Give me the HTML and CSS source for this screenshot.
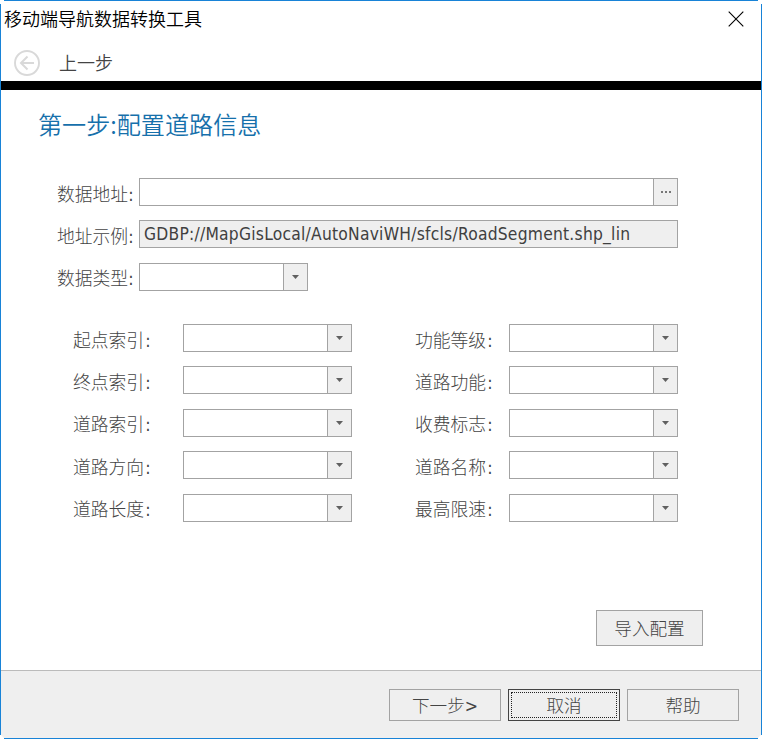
FILE: index.html
```
<!DOCTYPE html>
<html lang="zh-CN">
<head>
<meta charset="utf-8">
<title>移动端导航数据转换工具</title>
<link rel="stylesheet" href="styles.css">
</head>
<body>
<div class="window">
  <i class="corner tl"></i><i class="corner tr"></i><i class="corner bl"></i><i class="corner br"></i>
  <header class="titlebar">
    <span class="title">移动端导航数据转换工具</span>
    <svg class="close" width="16" height="16" viewBox="0 0 16 16"><path d="M.7.7l14.6 14.6M15.3.7L.7 15.3" stroke="#000" stroke-width="1.1" fill="none"/></svg>
  </header>
  <nav class="nav">
    <svg class="back" width="26" height="26" viewBox="0 0 26 26" fill="none" stroke="#d9d9d9"><circle cx="13" cy="13" r="12" stroke-width="1.9"/><path d="M20 13H7.5M13.5 6.500L7 13l6.500 6.500" stroke-width="2"/></svg>
    <span class="prev">上一步</span>
  </nav>
  <main class="page">
    <h1>第一步:配置道路信息</h1>
    <section class="source">
      <label>数据地址<b>:</b></label>
      <div class="field wide"><span class="value"></span><span class="btn dots"><i></i><i></i><i></i></span></div>
      <label>地址示例<b>:</b></label>
      <div class="field wide readonly"><span class="value">GDBP://MapGisLocal/AutoNaviWH/sfcls/RoadSegment.shp_lin</span></div>
      <label class="up">数据类型<b>:</b></label>
      <div class="field"><span class="value"></span><span class="btn"><i class="arrow"></i></span></div>
    </section>
    <section class="mapping">
      <label>起点索引<b>:</b></label><div class="field"><span class="value"></span><span class="btn"><i class="arrow"></i></span></div>
      <label>功能等级<b>:</b></label><div class="field"><span class="value"></span><span class="btn"><i class="arrow"></i></span></div>
      <label>终点索引<b>:</b></label><div class="field"><span class="value"></span><span class="btn"><i class="arrow"></i></span></div>
      <label>道路功能<b>:</b></label><div class="field"><span class="value"></span><span class="btn"><i class="arrow"></i></span></div>
      <label class="up">道路索引<b>:</b></label><div class="field"><span class="value"></span><span class="btn"><i class="arrow"></i></span></div>
      <label class="up">收费标志<b>:</b></label><div class="field"><span class="value"></span><span class="btn"><i class="arrow"></i></span></div>
      <label>道路方向<b>:</b></label><div class="field"><span class="value"></span><span class="btn"><i class="arrow"></i></span></div>
      <label>道路名称<b>:</b></label><div class="field"><span class="value"></span><span class="btn"><i class="arrow"></i></span></div>
      <label class="up">道路长度<b>:</b></label><div class="field"><span class="value"></span><span class="btn"><i class="arrow"></i></span></div>
      <label class="up">最高限速<b>:</b></label><div class="field"><span class="value"></span><span class="btn"><i class="arrow"></i></span></div>
    </section>
    <button class="import">导入配置</button>
  </main>
  <footer class="actions">
    <button>下一步<b>&gt;</b></button>
    <button class="focused"><span>取消</span></button>
    <button>帮助</button>
  </footer>
</div>
</body>
</html>
```
FILE: styles.css
```
* { box-sizing: border-box; }
body {
  margin: 0;
  background: #fff;
  color: #444;
  font-family: "Noto Sans CJK SC", sans-serif;
  font-weight: 300;
}
.window {
  position: relative;
  display: flex;
  flex-direction: column;
  width: 762px;
  height: 739px;
  border: 1px solid #1883d7;
  background: #fff;
}
.corner { position: absolute; width: 4px; height: 4px; background: #fff; }
.tl { left: -1px; top: -1px; }
.tr { right: -1px; top: -1px; }
.bl { left: -1px; bottom: -1px; clip-path: polygon(0 0, 1px 0, 4px 3px, 4px 4px, 0 4px); }
.br { right: -1px; bottom: -1px; clip-path: polygon(4px 0, 3px 0, 0 3px, 0 4px, 4px 4px); }
.titlebar {
  display: flex;
  justify-content: space-between;
  height: 40px;
  padding: 0 17px 0 3px;
  color: #000;
}
.title { font-size: 18px; line-height: 35px; white-space: nowrap; font-weight: 350; }
.close { margin-top: 10px; }
.nav {
  display: flex;
  height: 49px;
  padding: 9px 0 0 13px;
  border-bottom: 9px solid #000;
}
.prev { margin-left: 19px; font-size: 18px; line-height: 24px; font-weight: 350; }
.page { flex: 1; display: flex; flex-direction: column; padding: 16px 0 0 37px; }
h1 {
  margin: 0;
  height: 72px;
  color: #1670ab;
  font-size: 24.100px;
  font-weight: 350;
  line-height: 36px;
}
.source {
  display: grid;
  grid-template-columns: 82px 539px;
  grid-template-rows: 42px 43px 61px;
  padding-left: 19px;
}
.mapping {
  display: grid;
  grid-template-columns: 110px 169px 64px 93px 169px;
  grid-template-rows: 42px 43px 42px 43px 28px;
  padding-left: 35px;
}
.mapping label:nth-of-type(even) { grid-column: 4; margin-left: -1px; }
label { font-size: 17.800px; line-height: 30px; height: 28px; white-space: nowrap; }
label.up { line-height: 28px; }
b { font-family: "DejaVu Sans Condensed", "DejaVu Sans", sans-serif; font-weight: 400; }
.mapping b { margin-left: 1px; }
.field {
  display: flex;
  width: 169px;
  height: 28px;
  border: 1px solid #a3a3a3;
  background: #fff;
}
.field.wide { width: 539px; }
.value { flex: 1; }
.readonly { background: #efefef; }
.readonly .value {
  padding-left: 4px;
  color: #404040;
  font: 400 17.300px/27px "DejaVu Sans Condensed", "Noto Sans", sans-serif;
  letter-spacing: .235px;
  white-space: nowrap;
}
.btn {
  display: flex;
  align-items: center;
  justify-content: center;
  width: 25px;
  flex: none;
  width: 25px;
  margin-right: -1px;
  border: 0 solid #a3a3a3;
  border-width: 0 1px;
  background: #efefef;
}
.arrow {
  width: 7px;
  height: 4px;
  background: #606060;
  clip-path: polygon(0 0, 100% 0, 50% 100%);
}
.dots { gap: 2px; }
.dots i { width: 2px; height: 2px; background: #777; }
button {
  width: 112px;
  height: 32px;
  padding: 0;
  border: 1px solid #a3a3a3;
  background: #efefef;
  color: #444;
  font: inherit;
  font-size: 17.600px;
  line-height: 30px;
}
.import { width: 107px; height: 36px; margin: 88px 0 0 558px; line-height: 34px; }
.actions {
  display: flex;
  justify-content: flex-end;
  gap: 7px;
  height: 68px;
  padding: 18px 22px 0 0;
  border-top: 1px solid #bbb;
  background: #efefef;
}
.focused { border-color: #444; padding: 2px; }
.focused span { display: block; border: 1px dotted #222; height: 26px; line-height: 24px; }
```
